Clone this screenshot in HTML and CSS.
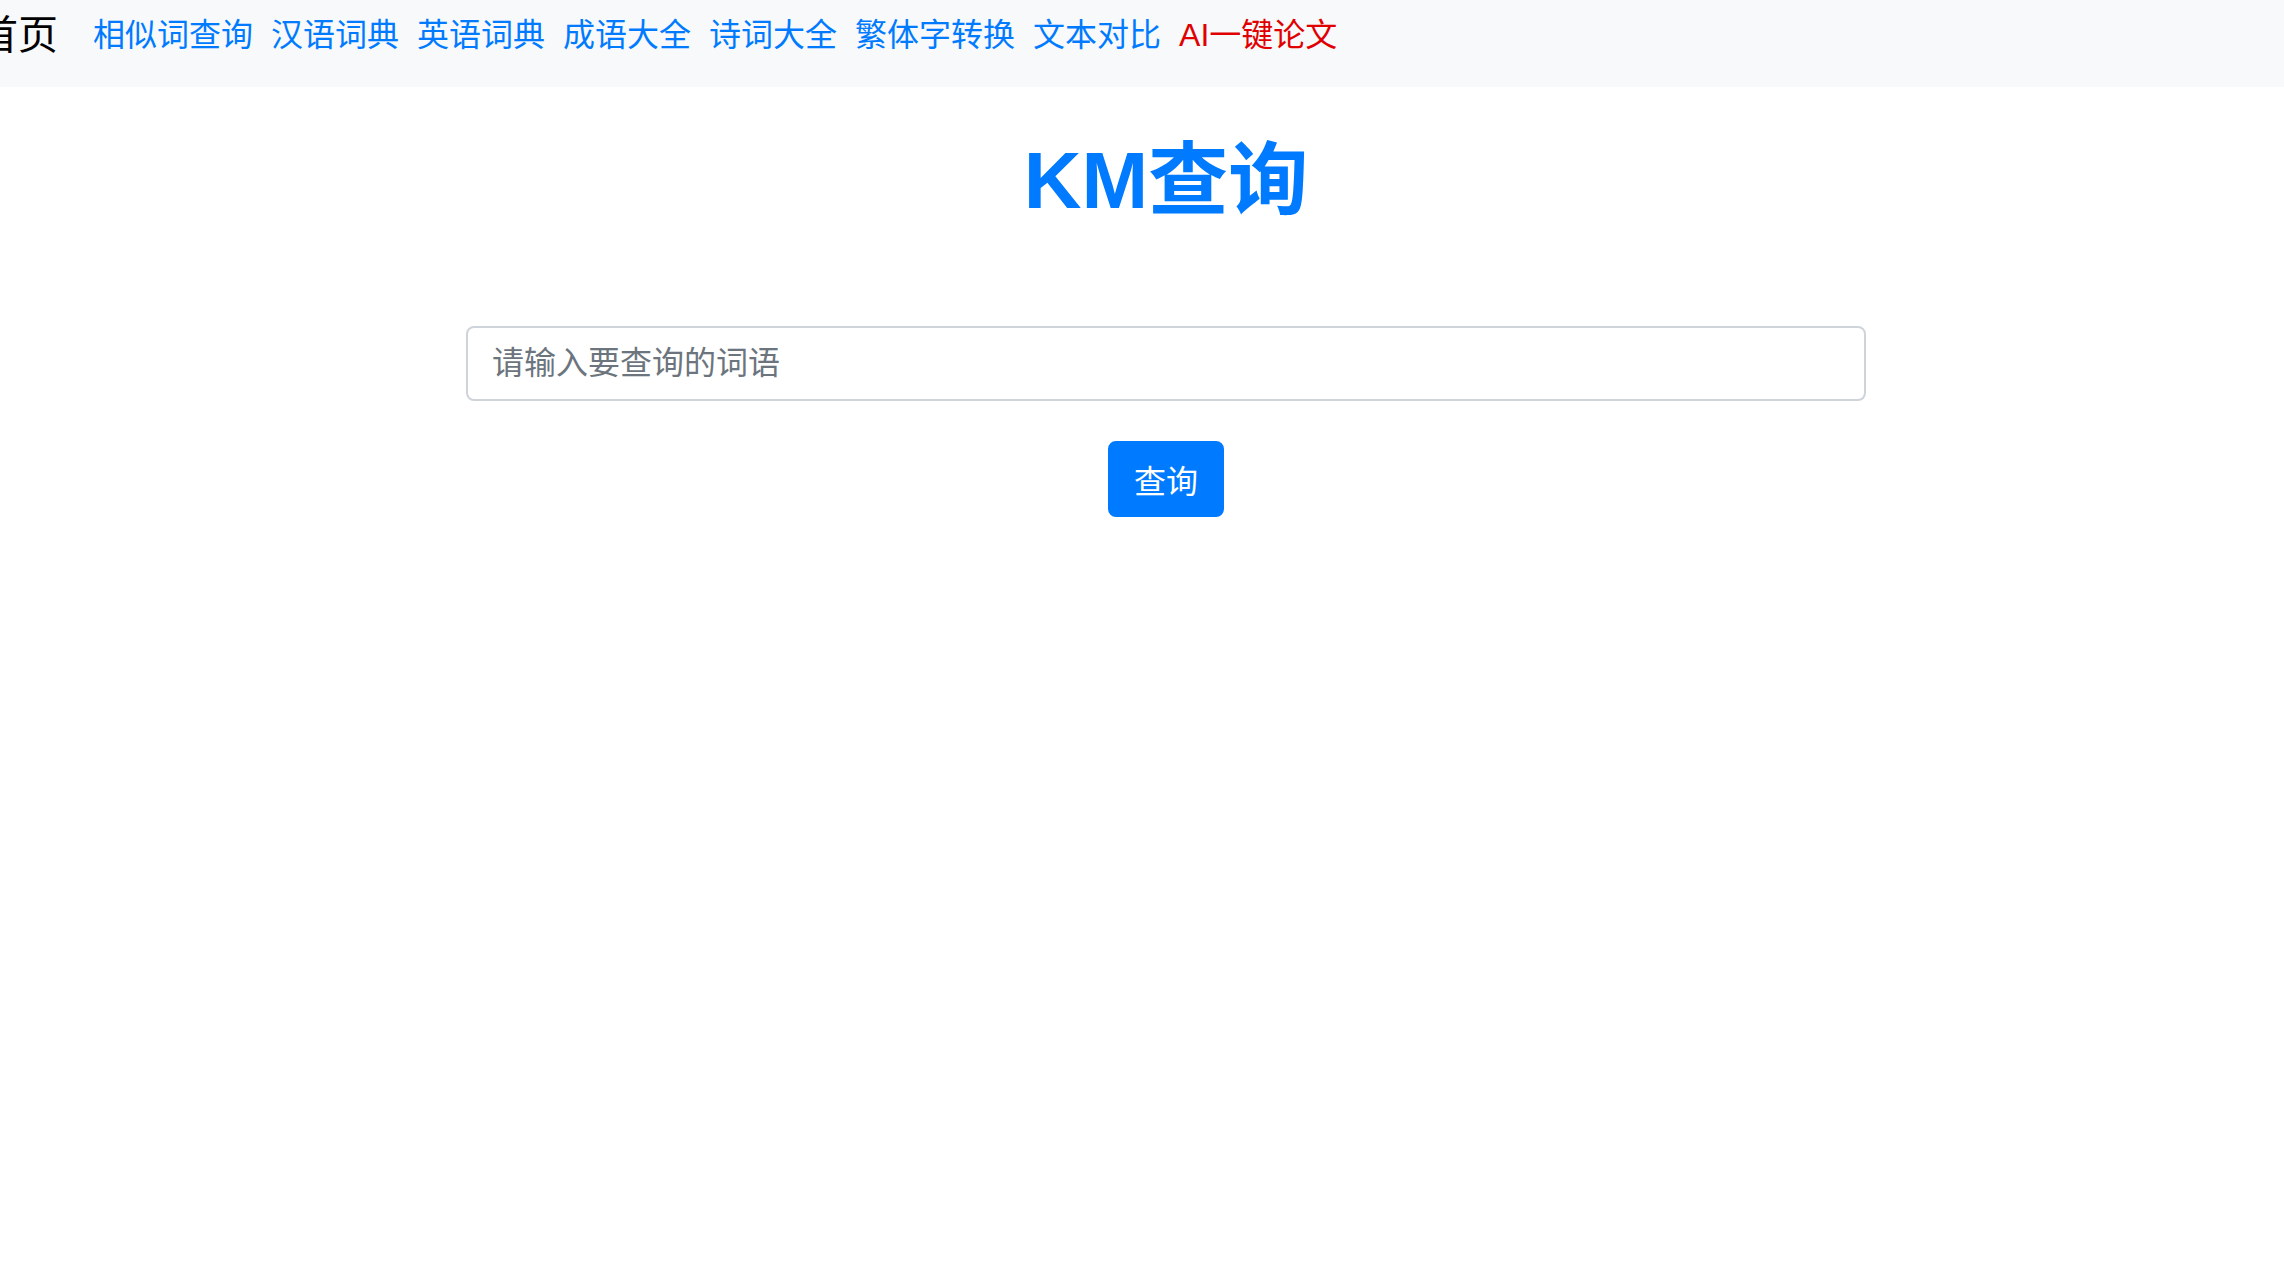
FILE: index.html
```html
<!DOCTYPE html>
<html lang="zh-CN">
<head>
    <meta charset="UTF-8">
    <meta name="viewport" content="width=device-width, initial-scale=1.0">
    <title>KM查询</title>
    <link rel="stylesheet" href="styles.css">
</head>
<body>
    <nav class="navbar">
        <a class="brand" href="#">首页</a>
        <a class="nav-link" href="#">相似词查询</a>
        <a class="nav-link" href="#">汉语词典</a>
        <a class="nav-link" href="#">英语词典</a>
        <a class="nav-link" href="#">成语大全</a>
        <a class="nav-link" href="#">诗词大全</a>
        <a class="nav-link" href="#">繁体字转换</a>
        <a class="nav-link" href="#">文本对比</a>
        <a class="nav-link hot" href="#">AI一键论文</a>
    </nav>

    <div class="page">
        <div class="container">
            <h1 class="title">KM查询</h1>
            <form class="search-form" onsubmit="return false;">
                <input type="text" class="search-box" placeholder="请输入要查询的词语">
                <button type="submit" class="btn-search">查询</button>
            </form>
        </div>
    </div>
</body>
</html>
```

FILE: styles.css
```css
body {
    margin: 0;
    font-family: "Liberation Sans", "Noto Sans CJK SC", sans-serif;
    background-color: #ffffff;
    color: #212529;
    overflow: hidden;
}
a {
    text-decoration: none;
}
.navbar {
    display: flex;
    align-items: center;
    height: 87px;
    box-sizing: border-box;
    padding-bottom: 18px;
    background-color: #f8f9fa;
}
.brand {
    font-size: 40px;
    line-height: 1.5;
    color: #000000;
    margin-left: -22px;
    margin-right: 35px;
}
.nav-link {
    font-size: 32px;
    line-height: 1.5;
    color: #007bff;
    margin-right: 18px;
}
.nav-link.hot {
    color: #e00000;
}
.page {
    padding-left: 48px;
}
.container {
    width: 1400px;
    margin: 0 auto;
}
.title {
    margin: 46px 0 97px;
    font-size: 80px;
    font-weight: 600;
    line-height: 1.2;
    text-align: center;
    color: #007bff;
}
.search-form {
    display: flex;
    flex-direction: column;
    align-items: center;
}
.search-box {
    width: 100%;
    height: 75px;
    box-sizing: border-box;
    padding: 12px 24px;
    font-family: inherit;
    font-size: 32px;
    color: #495057;
    background: #ffffff;
    border: 2px solid #ced4da;
    border-radius: 8px;
    outline: none;
}
.search-box::placeholder {
    color: #6c757d;
}
.btn-search {
    margin-top: 40px;
    height: 76px;
    padding: 12px 24px;
    font-family: inherit;
    font-size: 32px;
    color: #ffffff;
    background-color: #007bff;
    border: 2px solid #007bff;
    border-radius: 8px;
    cursor: pointer;
}
```
